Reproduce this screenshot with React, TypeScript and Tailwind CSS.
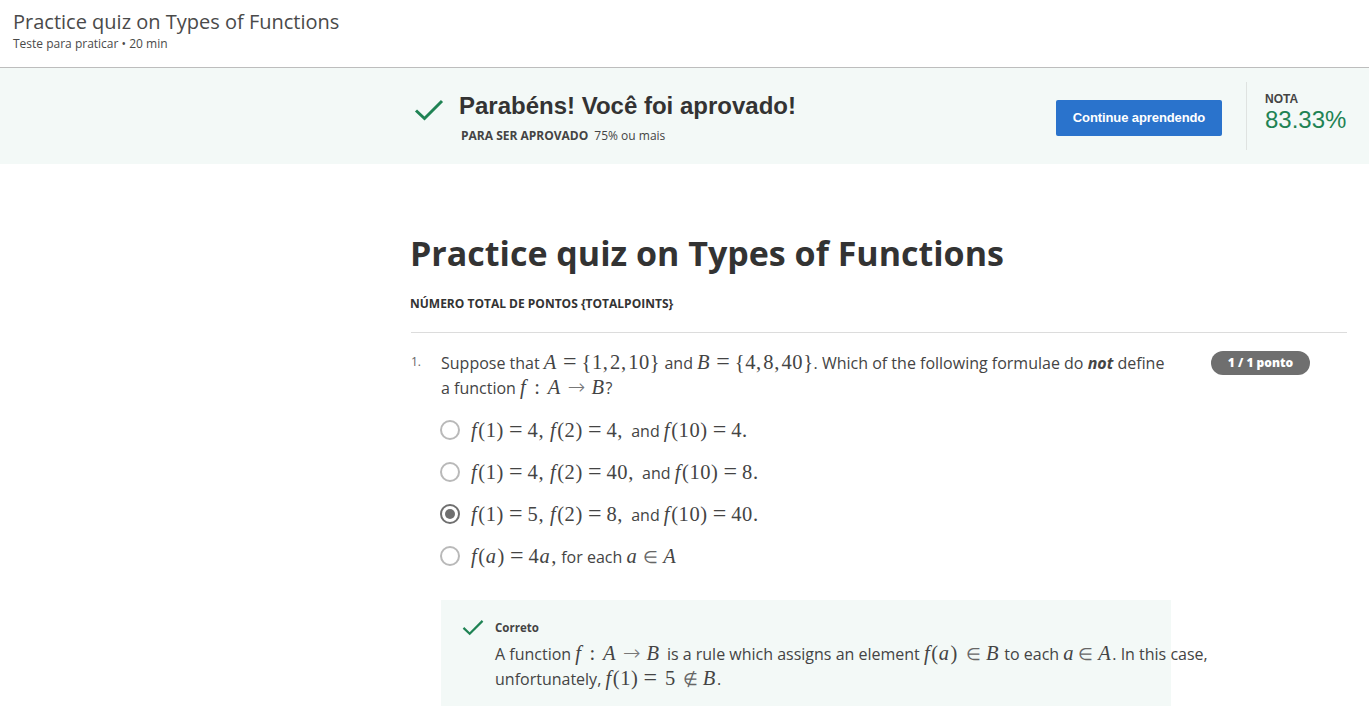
import React from 'react';

function CheckMark({ className }: { className: string }) {
  return (
    <svg viewBox="0 0 30 22" fill="none" className={className}>
      <path d="M2 11.5 L10.5 19.5 L28 2" stroke="#1f8354" strokeWidth="3" />
    </svg>
  );
}

function M({ children }: { children: React.ReactNode }) {
  return <span className="font-['Liberation_Serif',serif] text-[20.5px] tracking-[0.6px] leading-none text-[#444]">{children}</span>;
}

function V({ children }: { children: React.ReactNode }) {
  return <i className="pr-[1px]">{children}</i>;
}

function Eq() {
  return <span className="mx-[5px] text-[24px] leading-none tracking-normal">=</span>;
}

function Sym({ children }: { children: React.ReactNode }) {
  return <span className="mx-[5px] font-['DejaVu_Sans',sans-serif] font-light text-[17px] leading-none tracking-normal text-[#666]">{children}</span>;
}

function Arrow() {
  return <span className="mx-[6px] font-['DejaVu_Sans',sans-serif] font-light text-[21px] leading-none tracking-normal text-[#777]">→</span>;
}

function SetComma() {
  return <span className="mr-[1.5px]">,</span>;
}

function AndComma() {
  return <span className="mr-[4px]">,</span>;
}

function Radio({ checked }: { checked?: boolean }) {
  return (
    <span className={`flex items-center justify-center w-5 h-5 -ml-[1px] rounded-full border-2 shrink-0 ${checked ? 'border-[#6f6f6f]' : 'border-[#b9b9b9]'}`}>
      {checked && <span className="w-[10px] h-[10px] rounded-full bg-[#6f6f6f]" />}
    </span>
  );
}

const options: React.ReactNode[] = [
  <>
    <M><V>f</V>(1)<Eq />4, <V>f</V>(2)<Eq />4<AndComma /></M> and <M><V>f</V>(10)<Eq />4.</M>
  </>,
  <>
    <M><V>f</V>(1)<Eq />4, <V>f</V>(2)<Eq />40<AndComma /></M> and <M><V>f</V>(10)<Eq />8.</M>
  </>,
  <>
    <M><V>f</V>(1)<Eq />5, <V>f</V>(2)<Eq />8<AndComma /></M> and <M><V>f</V>(10)<Eq />40.</M>
  </>,
  <>
    <M><V>f</V>(<V>a</V>)<Eq />4<V>a</V>,</M> for each <M><V>a</V><Sym>∈</Sym><V>A</V></M>
  </>,
];

export default function App() {
  return (
    <div className="h-[718px] overflow-hidden bg-white font-['Open_Sans',sans-serif] text-[#444]">
      {/* Header */}
      <div className="h-[68px] border-b border-[#bdbdbd] pl-[13px] pt-[8px]">
        <h2 className="text-[20px] leading-[28px] text-[#4a4a4a]">Practice quiz on Types of Functions</h2>
        <p className="text-[12px] leading-[16px] text-[#4a4a4a]">Teste para praticar • 20 min</p>
      </div>

      {/* Banner */}
      <div className="h-[96px] bg-[#f3f9f7] flex items-center pl-[414px]">
        <CheckMark className="w-[30px] h-[22px] mt-[-12px] shrink-0" />
        <div className="ml-[15px] mt-[2px] w-[597px] shrink-0">
          <h3 className="font-['Liberation_Sans',sans-serif] font-bold text-[24px] leading-[30px] text-[#333]">Parabéns! Você foi aprovado!</h3>
          <p className="ml-[2px] mt-[7px] text-[12px] leading-[16px] text-[#444]">
            <span className="font-bold">PARA SER APROVADO</span>
            <span className="ml-[6px]">75% ou mais</span>
          </p>
        </div>
        <button className="w-[166px] h-[36px] mt-[4px] rounded-[2px] bg-[#2a73cc] text-white font-['Liberation_Sans',sans-serif] font-bold text-[13px] tracking-[-0.1px] shrink-0">
          Continue aprendendo
        </button>
        <div className="ml-[24px] h-[68px] border-l border-[#dfe3e1] pl-[18px] pt-[10px] shrink-0">
          <div className="font-['Liberation_Sans',sans-serif] font-bold text-[12px] leading-[14px] text-[#444]">NOTA</div>
          <div className="font-['Liberation_Sans',sans-serif] text-[24px] leading-[28px] text-[#1f8354]">83.33%</div>
        </div>
      </div>

      {/* Main */}
      <div className="ml-[411px] w-[936px]">
        <h1 className="-ml-[1px] mt-[65px] text-[34px] leading-[48px] font-bold text-[#333]">Practice quiz on Types of Functions</h1>
        <p className="-ml-[1px] mt-[19px] text-[12px] leading-[16px] font-bold text-[#333]">NÚMERO TOTAL DE PONTOS {'{TOTALPOINTS}'}</p>
        <div className="mt-[20px] border-t border-[#dcdcdc]" />

        <div className="flex mt-[16px]">
          <span className="w-[30px] shrink-0 text-[12px] leading-[25px] text-[#666]">1.</span>
          <div className="w-[730px] shrink-0 text-[16px] whitespace-nowrap">
            <div className="h-[25px] leading-[25px]">
              Suppose that <M><V>A</V><Eq />{'{'}1<SetComma />2<SetComma />10{'}'}</M> and <M><V>B</V><Eq />{'{'}4<SetComma />8<SetComma />40{'}'}</M>. Which of the following formulae do <b><i>not</i></b> define
            </div>
            <div className="h-[25px] pt-[2px] leading-[25px]">
              a function <M><V>f</V><span className="mx-[7px]">:</span><V>A</V><Arrow /><V>B</V></M>?
            </div>

            <div className="mt-[10px]">
              {options.map((o, i) => (
                <div key={i} className="flex items-center gap-[11px] h-[42px]">
                  <Radio checked={i === 2} />
                  <span>{o}</span>
                </div>
              ))}
            </div>

            <div className="mt-[23px] h-[106px] bg-[#f3f9f7] flex pl-[21px] pt-[19px]">
              <CheckMark className="w-[22px] h-[17px] shrink-0" />
              <div className="ml-[11px] mt-[1px]">
                <p className="text-[11.5px] leading-[16px] font-bold text-[#444]">Correto</p>
                <div className="mt-[4px] h-[25px] pt-[2px] leading-[25px]">
                  A function <M><V>f</V><span className="mx-[7px]">:</span><V>A</V><Arrow /><V>B</V><span className="mr-[2px]" /></M> is a rule which assigns an element <M><V>f</V>(<V>a</V>)<span className="ml-[3px]" /><Sym>∈</Sym><V>B</V></M> to each <M><V>a</V><span className="-ml-[2px]" /><Sym>∈</Sym><V>A</V></M>. In this case,
                </div>
                <div className="h-[25px] leading-[25px]">
                  unfortunately, <M><V>f</V>(1)<Eq /><span className="ml-[3px]">5</span><span className="ml-[2px]" /><Sym>∉</Sym><V>B</V></M>.
                </div>
              </div>
            </div>
          </div>
          <div className="ml-[40px] mt-[2px]">
            <span className="flex items-center justify-center w-[99px] h-[24px] rounded-full bg-[#6f6f6f] text-white text-[12px] font-extrabold">1 / 1 ponto</span>
          </div>
        </div>
      </div>
    </div>
  );
}
